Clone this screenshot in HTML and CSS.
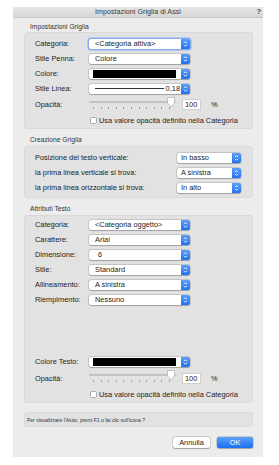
FILE: index.html
```html
<!DOCTYPE html>
<html>
  <head>
    <meta charset="utf-8">
    <title>Impostazioni Griglia di Assi</title>
    <link rel="stylesheet" href="styles.css">
  </head>
  <body>
    <div class="window">
      <div class="titlebar">
        <span class="title">Impostazioni Griglia di Assi</span>
        <span class="help-icon">?</span>
      </div>
      <div class="content">
        <div class="section-title">Impostazioni Griglia</div>
        <div class="group">
          <div class="row">
            <label>Categoria:</label>
            <div class="popup wide focus"><span class="val">&lt;Categoria attiva&gt;</span><span class="arrows"><svg viewBox="0 0 9 10"><path d="M3 4.2 L4.5 2.7 L6 4.2 M3 5.8 L4.5 7.3 L6 5.8"/></svg></span></div>
          </div>
          <div class="row">
            <label>Stile Penna:</label>
            <div class="popup wide"><span class="val">Colore</span><span class="arrows"><svg viewBox="0 0 9 10"><path d="M3 4.2 L4.5 2.7 L6 4.2 M3 5.8 L4.5 7.3 L6 5.8"/></svg></span></div>
          </div>
          <div class="row">
            <label>Colore:</label>
            <div class="popup wide"><span class="swatch"></span><span class="arrows"><svg viewBox="0 0 9 10"><path d="M3 4.2 L4.5 2.7 L6 4.2 M3 5.8 L4.5 7.3 L6 5.8"/></svg></span></div>
          </div>
          <div class="row">
            <label>Stile Linea:</label>
            <div class="popup wide"><span class="line"></span><span class="thick">0,18</span><span class="arrows"><svg viewBox="0 0 9 10"><path d="M3 4.2 L4.5 2.7 L6 4.2 M3 5.8 L4.5 7.3 L6 5.8"/></svg></span></div>
          </div>
          <div class="row slider-row">
            <label>Opacità:</label>
            <div class="slider">
              <div class="track"></div>
              <div class="ticks"><i></i><i></i><i></i><i></i><i></i><i></i><i></i><i></i><i></i><i></i><i></i></div>
              <svg class="thumb" viewBox="0 0 8 10"><path d="M0.5 0.5 H7.5 V6 L4 9.5 L0.5 6 Z"/></svg>
            </div>
            <div class="number">100</div>
            <span class="pct">%</span>
          </div>
          <div class="row check-row">
            <span class="checkbox"></span>
            <span>Usa valore opacità definito nella Categoria</span>
          </div>
        </div>

        <div class="section-title">Creazione Griglia</div>
        <div class="group g2">
          <div class="row">
            <label class="long">Posizione del testo verticale:</label>
            <div class="popup small"><span class="val">In basso</span><span class="arrows"><svg viewBox="0 0 9 10"><path d="M3 4.2 L4.5 2.7 L6 4.2 M3 5.8 L4.5 7.3 L6 5.8"/></svg></span></div>
          </div>
          <div class="row">
            <label class="long">la prima linea verticale si trova:</label>
            <div class="popup small"><span class="val">A sinistra</span><span class="arrows"><svg viewBox="0 0 9 10"><path d="M3 4.2 L4.5 2.7 L6 4.2 M3 5.8 L4.5 7.3 L6 5.8"/></svg></span></div>
          </div>
          <div class="row">
            <label class="long">la prima linea orizzontale si trova:</label>
            <div class="popup small"><span class="val">In alto</span><span class="arrows"><svg viewBox="0 0 9 10"><path d="M3 4.2 L4.5 2.7 L6 4.2 M3 5.8 L4.5 7.3 L6 5.8"/></svg></span></div>
          </div>
        </div>

        <div class="section-title">Attributi Testo</div>
        <div class="group g3">
          <div class="row">
            <label>Categoria:</label>
            <div class="popup wide"><span class="val">&lt;Categoria oggetto&gt;</span><span class="arrows"><svg viewBox="0 0 9 10"><path d="M3 4.2 L4.5 2.7 L6 4.2 M3 5.8 L4.5 7.3 L6 5.8"/></svg></span></div>
          </div>
          <div class="row">
            <label>Carattere:</label>
            <div class="popup wide"><span class="val">Arial</span><span class="arrows"><svg viewBox="0 0 9 10"><path d="M3 4.2 L4.5 2.7 L6 4.2 M3 5.8 L4.5 7.3 L6 5.8"/></svg></span></div>
          </div>
          <div class="row">
            <label>Dimensione:</label>
            <div class="popup wide"><span class="val indent">6</span><span class="arrows"><svg viewBox="0 0 9 10"><path d="M3 4.2 L4.5 2.7 L6 4.2 M3 5.8 L4.5 7.3 L6 5.8"/></svg></span></div>
          </div>
          <div class="row">
            <label>Stile:</label>
            <div class="popup wide"><span class="val">Standard</span><span class="arrows"><svg viewBox="0 0 9 10"><path d="M3 4.2 L4.5 2.7 L6 4.2 M3 5.8 L4.5 7.3 L6 5.8"/></svg></span></div>
          </div>
          <div class="row">
            <label>Allineamento:</label>
            <div class="popup wide"><span class="val">A sinistra</span><span class="arrows"><svg viewBox="0 0 9 10"><path d="M3 4.2 L4.5 2.7 L6 4.2 M3 5.8 L4.5 7.3 L6 5.8"/></svg></span></div>
          </div>
          <div class="row">
            <label>Riempimento:</label>
            <div class="popup wide"><span class="val">Nessuno</span><span class="arrows"><svg viewBox="0 0 9 10"><path d="M3 4.2 L4.5 2.7 L6 4.2 M3 5.8 L4.5 7.3 L6 5.8"/></svg></span></div>
          </div>
          <div class="spacer"></div>
          <div class="row">
            <label>Colore Testo:</label>
            <div class="popup wide"><span class="swatch"></span><span class="arrows"><svg viewBox="0 0 9 10"><path d="M3 4.2 L4.5 2.7 L6 4.2 M3 5.8 L4.5 7.3 L6 5.8"/></svg></span></div>
          </div>
          <div class="row slider-row">
            <label>Opacità:</label>
            <div class="slider">
              <div class="track"></div>
              <div class="ticks"><i></i><i></i><i></i><i></i><i></i><i></i><i></i><i></i><i></i><i></i><i></i></div>
              <svg class="thumb" viewBox="0 0 8 10"><path d="M0.5 0.5 H7.5 V6 L4 9.5 L0.5 6 Z"/></svg>
            </div>
            <div class="number">100</div>
            <span class="pct">%</span>
          </div>
          <div class="row check-row">
            <span class="checkbox"></span>
            <span>Usa valore opacità definito nella Categoria</span>
          </div>
        </div>

        <div class="help-box">Per visualizzare l'Aiuto, premi F1 o fai clic sull'icona ?</div>

        <div class="buttons">
          <button class="btn">Annulla</button>
          <button class="btn primary">OK</button>
        </div>
      </div>
    </div>
  </body>
</html>
```

FILE: styles.css
```css
body {
  margin: 0;
  background: #ffffff;
  font-family: "Liberation Sans", Arial, sans-serif;
  color: #1c1c1c;
}

.window {
  width: 250px;
  height: 450px;
  margin: 7px 0 0 13px;
  background: #ececec;
  box-sizing: border-box;
}

.titlebar {
  height: 11px;
  box-sizing: border-box;
  border-bottom: 1px solid #c9c9c9;
  background: linear-gradient(#e6e6e6, #d6d6d6);
  display: flex;
  align-items: center;
  justify-content: center;
  position: relative;
}

.title {
  font-size: 7.2px;
  line-height: 10px;
  color: #3a3a3a;
}

.help-icon {
  position: absolute;
  right: 2px;
  top: 1px;
  font-size: 7px;
  font-weight: bold;
  line-height: 8px;
  color: #444;
}

.content {
  padding: 0 10px 0 11px;
}

.section-title {
  height: 14px;
  box-sizing: border-box;
  padding: 0 0 1px 6px;
  display: flex;
  align-items: flex-end;
  font-size: 6.7px;
  line-height: 8px;
  color: #333;
}

.group {
  background: #e2e2e2;
  border: 1px solid #d9d9d9;
  border-radius: 3px;
  padding: 3px 0 0 10px;
  height: 97px;
  box-sizing: border-box;
}

.group + .section-title {
  height: 17px;
  padding-bottom: 2px;
}

.g2 {
  height: 52px;
}

.g3 {
  height: 188px;
  padding-top: 1px;
}

.row {
  height: 15px;
  display: flex;
  align-items: center;
  font-size: 7.4px;
}

.row label {
  width: 54px;
  flex: none;
}

.row label.long {
  width: 142px;
}

.popup {
  height: 10px;
  background: #fff;
  border-radius: 2px;
  box-shadow: 0 0 0 0.5px rgba(0, 0, 0, 0.22), 0 0.5px 1px rgba(0, 0, 0, 0.2);
  display: flex;
  align-items: center;
  box-sizing: border-box;
}

.popup.wide {
  width: 101px;
}

.popup.small {
  width: 64px;
}

.popup.small .val {
  padding-left: 4px;
}

.popup.focus {
  box-shadow: 0 0 0 1.5px #84acef, 0 0 0 0.5px rgba(0, 0, 0, 0.2);
}

.val {
  flex: 1;
  padding-left: 6px;
  white-space: nowrap;
  overflow: hidden;
  line-height: 10px;
}

.val.indent {
  padding-left: 9px;
}

.swatch {
  flex: 1;
  height: 8px;
  margin: 0 5px 0 4px;
  background: #000;
}

.line {
  flex: 1;
  height: 1px;
  margin-left: 6px;
  background: #333;
}

.thick {
  padding: 0 1px 0 2px;
  line-height: 10px;
}

.arrows {
  width: 9px;
  height: 10px;
  flex: none;
  border-radius: 0 2px 2px 0;
  background: linear-gradient(#5b9df9, #2170f0);
}

.arrows svg {
  display: block;
  width: 9px;
  height: 10px;
  fill: none;
  stroke: #fff;
  stroke-width: 0.9;
}

.slider-row {
  height: 17px;
}

.slider {
  width: 87px;
  height: 12px;
  position: relative;
  flex: none;
}

.track {
  height: 2px;
  margin-top: 2px;
  background: #c2c2c2;
  border-radius: 1px;
}

.ticks {
  display: flex;
  justify-content: space-between;
  margin: 4px 6px 0 4px;
}

.ticks i {
  width: 1px;
  height: 2px;
  background: #9a9a9a;
}

.thumb {
  position: absolute;
  right: 1px;
  top: -2px;
  width: 8px;
  height: 10px;
  fill: #fff;
  stroke: #b0b0b0;
  stroke-width: 0.7;
}

.number {
  width: 19px;
  height: 11px;
  margin-left: 6px;
  box-sizing: border-box;
  background: #fff;
  border: 1px solid #cfcfcf;
  padding-left: 2px;
  line-height: 9px;
}

.pct {
  margin-left: 10px;
}

.check-row {
  padding-left: 55px;
}

.checkbox {
  width: 7px;
  height: 7px;
  box-sizing: border-box;
  background: #fff;
  border: 1px solid #ababab;
  border-radius: 1.5px;
  margin-right: 2px;
}

.spacer {
  height: 47px;
}

.g3 .slider-row {
  height: 18px;
}

.help-box {
  margin-top: 9px;
  height: 15px;
  box-sizing: border-box;
  background: #e2e2e2;
  border: 1px solid #dadada;
  border-radius: 3px;
  padding-left: 2px;
  display: flex;
  align-items: center;
  font-size: 5px;
  color: #333;
}

.buttons {
  margin-top: 10px;
  display: flex;
  justify-content: flex-end;
  gap: 7px;
}

.btn {
  height: 11px;
  width: 37px;
  padding: 0;
  font-family: inherit;
  font-size: 7.4px;
  line-height: 10px;
  border: none;
  border-radius: 2px;
  background: #fff;
  color: #222;
  box-shadow: 0 0 0 0.5px rgba(0, 0, 0, 0.25), 0 0.5px 1px rgba(0, 0, 0, 0.2);
}

.btn.primary {
  width: 36px;
  color: #fff;
  background: linear-gradient(#5da1fa, #1b6ff0);
}
```
